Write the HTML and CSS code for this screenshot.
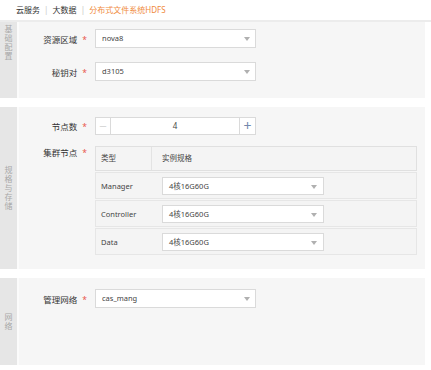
FILE: index.html
```html
<!DOCTYPE html>
<html lang="zh-CN">
<head>
    <meta charset="UTF-8">
    <title>分布式文件系统HDFS</title>
    <link rel="stylesheet" href="styles.css">
</head>
<body>
    <div class="crumb">
        <span>云服务</span>
        <span class="sep">|</span>
        <span>大数据</span>
        <span class="sep">|</span>
        <span class="current">分布式文件系统HDFS</span>
    </div>

    <!-- 基础配置 -->
    <div class="section section-basic">
        <div class="strip"><span>基础配置</span></div>
        <div class="panel">
            <div class="row">
                <label class="label">资源区域<i>*</i></label>
                <div class="select">nova8</div>
            </div>
            <div class="row">
                <label class="label">秘钥对<i>*</i></label>
                <div class="select">d3105</div>
            </div>
        </div>
    </div>

    <!-- 规格与存储 -->
    <div class="section section-spec">
        <div class="strip"><span>规格与存储</span></div>
        <div class="panel">
            <div class="row">
                <label class="label">节点数<i>*</i></label>
                <div class="stepper">
                    <span class="minus">—</span>
                    <span class="value">4</span>
                    <span class="plus">+</span>
                </div>
            </div>
            <div class="row row-top">
                <label class="label">集群节点<i>*</i></label>
                <div class="nodes">
                    <div class="nodes-head">
                        <div class="col-type">类型</div>
                        <div class="col-spec">实例规格</div>
                    </div>
                    <div class="nodes-row">
                        <div class="col-type">Manager</div>
                        <div class="select select-small">4核16G60G</div>
                    </div>
                    <div class="nodes-row">
                        <div class="col-type">Controller</div>
                        <div class="select select-small">4核16G60G</div>
                    </div>
                    <div class="nodes-row">
                        <div class="col-type">Data</div>
                        <div class="select select-small">4核16G60G</div>
                    </div>
                </div>
            </div>
        </div>
    </div>

    <!-- 网络 -->
    <div class="section section-net">
        <div class="strip"><span>网络</span></div>
        <div class="panel">
            <div class="row">
                <label class="label">管理网络<i>*</i></label>
                <div class="select">cas_mang</div>
            </div>
        </div>
    </div>
</body>
</html>
```

FILE: styles.css
```css
/* General styles */
body {
    font-family: "Noto Sans", "Noto Sans CJK SC", sans-serif;
    font-size: 7.5px;
    margin: 0;
    padding: 0;
    background-color: #fff;
    color: #444;
}

/* Breadcrumb */
.crumb {
    height: 20px;
    line-height: 20px;
    padding-left: 16px;
    border-bottom: 2px solid #ececec;
    font-size: 8px;
    color: #333;
}

.crumb .sep {
    color: #c8c8c8;
    margin: 0 2px;
}

.crumb .current {
    color: #f08a3c;
}

/* Sections */
.section {
    display: flex;
    margin-right: 6px;
}

.section-basic {
    height: 76px;
}

.section-spec {
    height: 162px;
    margin-top: 9px;
}

.section-net {
    height: 87px;
    margin-top: 9px;
}

.strip {
    width: 17px;
    background-color: #e6e6e6;
    display: flex;
    justify-content: center;
    align-items: center;
    color: #a8a8a8;
    font-size: 8px;
}

.strip span {
    writing-mode: vertical-rl;
    letter-spacing: 1px;
}

.section-basic .strip {
    align-items: flex-start;
    padding-top: 3px;
}

.panel {
    flex: 1;
    background-color: #f6f6f6;
    border-left: 2px solid #fbfbfb;
    padding-top: 7px;
}

.section-spec .panel {
    padding-top: 10px;
}

.section-net .panel {
    padding-top: 11px;
}

/* Form rows */
.row {
    display: flex;
    align-items: center;
    margin-bottom: 14px;
}

.row-top {
    align-items: flex-start;
    margin-bottom: 0;
    margin-top: -3px;
}

.row-top .label {
    line-height: 14px;
}

.label {
    width: 68px;
    text-align: right;
    margin-right: 8px;
    font-size: 8.5px;
    color: #333;
}

.label i {
    font-style: normal;
    color: #e8544a;
    margin-left: 5px;
}

/* Select box */
.select {
    position: relative;
    width: 150px;
    height: 17px;
    line-height: 17px;
    padding-left: 6px;
    padding-right: 3px;
    background-color: #fff;
    border: 1px solid #dadada;
    color: #444;
}

.select::after {
    content: "";
    position: absolute;
    right: 5px;
    top: 7px;
    border-left: 3px solid transparent;
    border-right: 3px solid transparent;
    border-top: 4px solid #b0b0b0;
}

.select-small {
    width: 151px;
    height: 16px;
    line-height: 16px;
}

.select-small::after {
    right: 6px;
}

/* Stepper */
.stepper {
    display: flex;
    width: 159px;
    height: 16px;
    background-color: #fff;
    border: 1px solid #dadada;
}

.stepper .minus {
    width: 14px;
    border-right: 1px solid #dadada;
    text-align: center;
    line-height: 16px;
    color: #c4c4c4;
    font-size: 7px;
}

.stepper .value {
    flex: 1;
    text-align: center;
    line-height: 16px;
    font-size: 8px;
}

.stepper .plus {
    width: 15px;
    border-left: 1px solid #dadada;
    text-align: center;
    line-height: 15px;
    color: #7388ad;
    font-size: 14px;
}

/* Nodes table */
.nodes {
    width: 322px;
}

.nodes-head {
    display: flex;
    height: 23px;
    line-height: 23px;
    border: 1px solid #e0e0e0;
    background-color: #f4f4f4;
}

.nodes-head .col-type {
    width: 50px;
    padding-left: 5px;
    border-right: 1px solid #e3e3e3;
}

.nodes-head .col-spec {
    padding-left: 10px;
}

.nodes-row {
    display: flex;
    align-items: center;
    height: 25px;
    margin-top: 1px;
    border: 1px solid #e6e6e6;
    background-color: #f4f4f4;
}

.nodes-row .col-type {
    width: 61px;
    padding-left: 5px;
}
```
